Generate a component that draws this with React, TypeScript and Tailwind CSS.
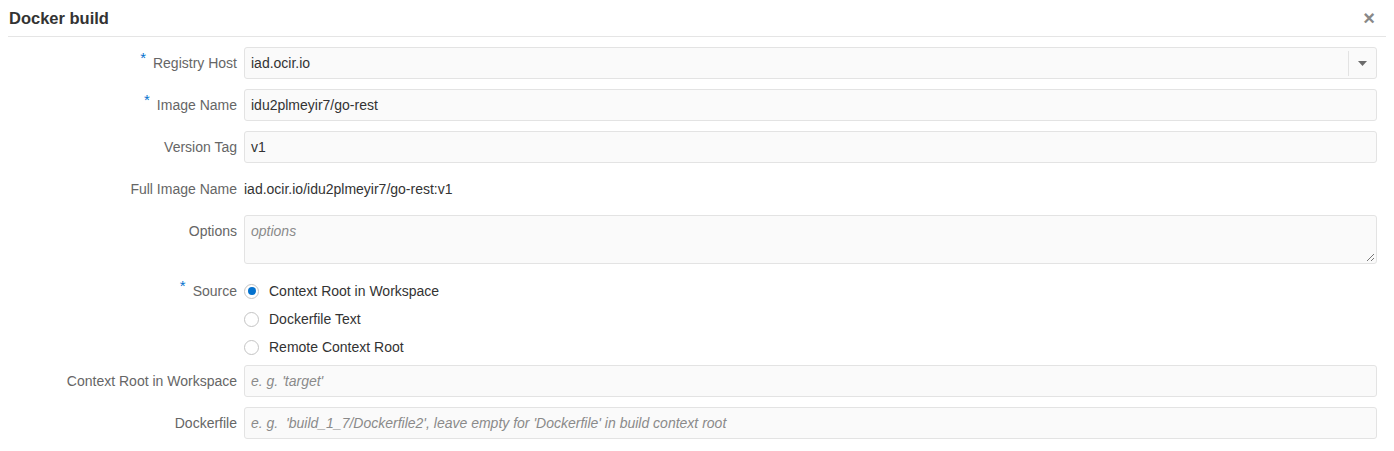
import React from "react";

const font = { fontFamily: '"Liberation Sans", Arial, sans-serif' };

function Label({ text, required }: { text: string; required?: boolean }) {
  return (
    <div className="flex items-center justify-end pr-[7px] text-[14px] text-[#666]">
      {required && <span className="relative top-[-5px] mr-[7px] text-[#0572ce] text-[15px]">*</span>}
      <span>{text}</span>
    </div>
  );
}

function Input({ value, placeholder }: { value?: string; placeholder?: string }) {
  return (
    <div className="flex h-[32px] flex-1 items-center rounded-[3px] border border-[#e3e3e3] bg-[#fafafa] px-[6px] text-[14px]">
      {value ? (
        <span className="text-[#333]">{value}</span>
      ) : (
        <span className="whitespace-pre italic text-[#8a8a8a]">{placeholder}</span>
      )}
    </div>
  );
}

function Radio({ label, checked }: { label: string; checked?: boolean }) {
  return (
    <div className="flex h-[28px] items-center text-[14px] text-[#333]">
      <div className="ml-[0px] mr-[10px] flex h-[15px] w-[15px] items-center justify-center rounded-full border border-[#c4c4c4] bg-white">
        {checked && <div className="h-[8px] w-[8px] rounded-full bg-[#0572ce]" />}
      </div>
      <span>{label}</span>
    </div>
  );
}

export default function App() {
  return (
    <div className="h-[451px] w-[1394px] bg-white" style={font}>
      <div className="mx-[8px] flex h-[37px] items-center justify-between border-b border-[#e5e5e5] pl-[1px] pr-[11px]">
        <span className="text-[16.5px] font-bold text-[#333]">Docker build</span>
        <span className="text-[20px] font-bold leading-none text-[#888]">×</span>
      </div>
      <div className="flex flex-col pr-[17px] pt-[10px]">
        <div className="grid grid-cols-[244px_1fr]">
          <Label text="Registry Host" required />
          <div className="flex h-[32px] items-center rounded-[3px] border border-[#e3e3e3] bg-[#fafafa] text-[14px]">
            <span className="flex-1 px-[6px] text-[#333]">iad.ocir.io</span>
            <div className="h-[25px] w-px bg-[#e3e3e3]" />
            <div className="flex w-[27px] items-center justify-center">
              <svg width="9" height="5" viewBox="0 0 9 5">
                <path d="M0 0 L9 0 L4.5 5 Z" fill="#6b6b6b" />
              </svg>
            </div>
          </div>
        </div>
        <div className="mt-[10px] grid grid-cols-[244px_1fr]">
          <Label text="Image Name" required />
          <Input value="idu2plmeyir7/go-rest" />
        </div>
        <div className="mt-[10px] grid grid-cols-[244px_1fr]">
          <Label text="Version Tag" />
          <Input value="v1" />
        </div>
        <div className="mt-[10px] grid h-[32px] grid-cols-[244px_1fr]">
          <Label text="Full Image Name" />
          <div className="flex items-center text-[14px] text-[#333]">iad.ocir.io/idu2plmeyir7/go-rest:v1</div>
        </div>
        <div className="mt-[10px] grid grid-cols-[244px_1fr]">
          <div className="flex items-start justify-end pr-[7px] pt-[6px] text-[14px] text-[#666]">Options</div>
          <div className="relative h-[49px] rounded-[3px] border border-[#e3e3e3] bg-[#fafafa] px-[6px] pt-[5px] text-[14px] italic text-[#8a8a8a]">
            options
            <svg className="absolute bottom-[2px] right-[2px]" width="8" height="8" viewBox="0 0 8 8">
              <path d="M8 1 L1 8 M8 5 L5 8" stroke="#777" strokeWidth="1" />
            </svg>
          </div>
        </div>
        <div className="mt-[13px] grid grid-cols-[244px_1fr]">
          <div className="flex h-[28px] items-center justify-end pr-[7px] text-[14px] text-[#666]">
            <span className="relative top-[-5px] mr-[7px] text-[15px] text-[#0572ce]">*</span>
            <span>Source</span>
          </div>
          <div className="flex flex-col">
            <Radio label="Context Root in Workspace" checked />
            <Radio label="Dockerfile Text" />
            <Radio label="Remote Context Root" />
          </div>
        </div>
        <div className="mt-[4px] grid grid-cols-[244px_1fr]">
          <Label text="Context Root in Workspace" />
          <Input placeholder="e. g. 'target'" />
        </div>
        <div className="mt-[10px] grid grid-cols-[244px_1fr]">
          <Label text="Dockerfile" />
          <Input placeholder="e. g.  'build_1_7/Dockerfile2', leave empty for 'Dockerfile' in build context root" />
        </div>
      </div>
    </div>
  );
}
